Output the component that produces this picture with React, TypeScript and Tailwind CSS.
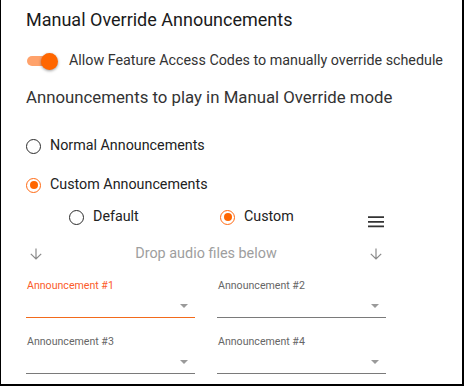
import React from "react";

function Radio({ checked, label }: { checked?: boolean; label: string }) {
  return (
    <div className="flex items-center h-[24px]">
      <span
        className={
          "w-[15px] h-[15px] rounded-full border-[1.5px] flex items-center justify-center shrink-0 " +
          (checked ? "border-[#ff6a13]" : "border-[#2b2b2b]")
        }
      >
        {checked && <span className="w-[8px] h-[8px] rounded-full bg-[#ff6600]" />}
      </span>
      <span className="ml-[9px] text-[14.3px] text-[#222]">{label}</span>
    </div>
  );
}

function ArrowDown() {
  return (
    <svg width="12" height="12" viewBox="0 0 12 12" className="shrink-0">
      <path d="M6 0.5V11M0.8 5.8L6 11L11.2 5.8" fill="none" stroke="#8a8a8a" strokeWidth="1.2" />
    </svg>
  );
}

function Field({ label, active }: { label: string; active?: boolean }) {
  return (
    <div className="w-[169px]">
      <div
        className={
          "h-[16px] flex items-center text-[10.6px] leading-none pl-[1px] " +
          (active ? "text-[#fb5b2a]" : "text-[#666]")
        }
      >
        {label}
      </div>
      <div
        className={
          "h-[24px] flex items-center justify-end pr-[7px] border-b " +
          (active ? "border-[#f26a1b]" : "border-[#7a7a7a]")
        }
      >
        <span className="w-0 h-0 border-l-[4.5px] border-r-[4.5px] border-t-[4.5px] border-l-transparent border-r-transparent border-t-[#9a9a9a] mt-[1px]" />
      </div>
    </div>
  );
}

export default function App() {
  return (
    <div
      className="w-[464px] h-[386px] bg-white border-l border-r-2 border-b-2 border-black pl-[25px] pt-[7px] flex flex-col"
      style={{ fontFamily: "Roboto, 'Liberation Sans', sans-serif" }}
    >
      {/* Heading */}
      <div className="h-[24px] flex items-center text-[18px] text-[#1a1a1a]">
        Manual Override Announcements
      </div>

      {/* Toggle */}
      <div className="mt-[18px] h-[24px] flex items-center">
        <div className="relative w-[32px] h-[17px] flex items-center ml-[1px]">
          <div className="w-[28px] h-[10px] rounded-full bg-[#ffa26b]" />
          <div className="absolute right-[1px] top-0 w-[17px] h-[17px] rounded-full bg-[#ff6600] shadow-[0_1px_3px_rgba(0,0,0,0.4)]" />
        </div>
        <span className="ml-[10px] text-[14.3px] text-[#333]">
          Allow Feature Access Codes to manually override schedule
        </span>
      </div>

      <div className="mt-[13px] h-[24px] flex items-center text-[16.8px] text-[#333]">
        Announcements to play in Manual Override mode
      </div>

      {/* Mode radios */}
      <div className="mt-[24px]">
        <Radio label="Normal Announcements" />
      </div>
      <div className="mt-[15px]">
        <Radio checked label="Custom Announcements" />
      </div>

      <div className="mt-[8px] flex items-start pl-[43px]">
        <div className="w-[151px]">
          <Radio label="Default" />
        </div>
        <div className="w-[148px]">
          <Radio checked label="Custom" />
        </div>
        <svg width="16" height="12" viewBox="0 0 16 12" className="mt-[11px]">
          <path d="M0 1.2h16M0 5.8h16M0 10.4h16" stroke="#333" strokeWidth="1.8" />
        </svg>
      </div>

      {/* Drop zone */}
      <div className="mt-[13px] h-[24px] flex items-center w-[356px]">
        <div className="pl-[4px]">
          <ArrowDown />
        </div>
        <span className="flex-1 text-center text-[14.4px] text-[#9e9e9e]">Drop audio files below</span>
        <ArrowDown />
      </div>

      {/* Announcements */}
      <div className="mt-[12px] grid grid-cols-[169px_169px] gap-x-[22px] gap-y-[16px]">
        <Field label="Announcement #1" active />
        <Field label="Announcement #2" />
        <Field label="Announcement #3" />
        <Field label="Announcement #4" />
      </div>
    </div>
  );
}
